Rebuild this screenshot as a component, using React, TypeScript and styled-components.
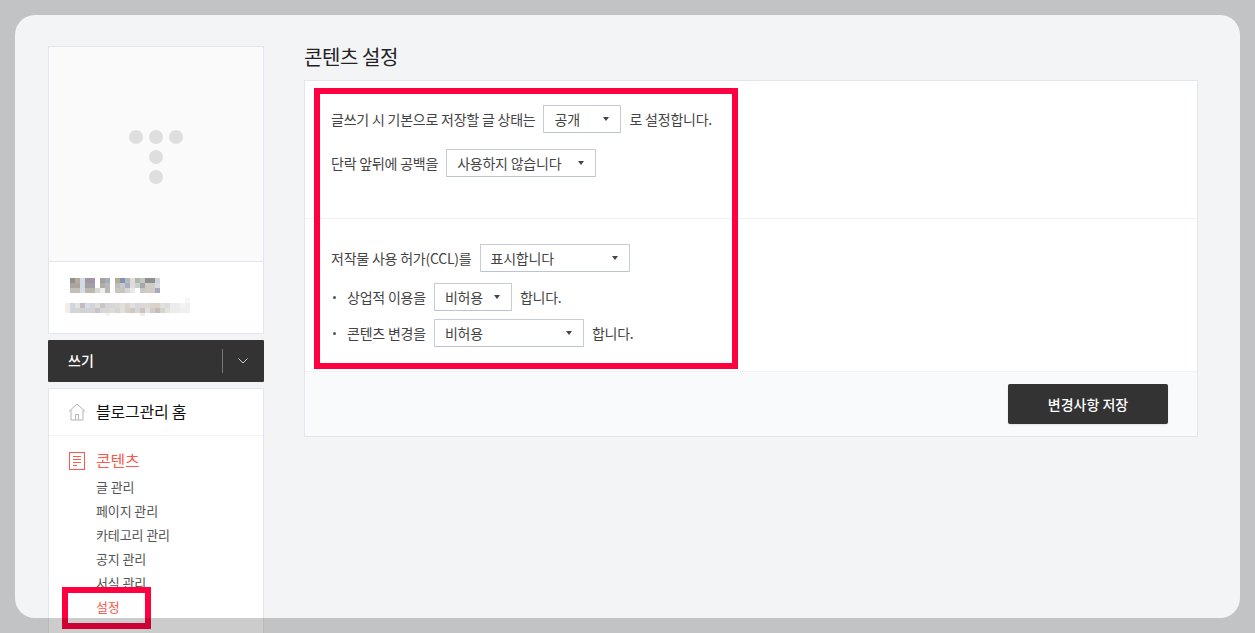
import React from "react";
import styled, { createGlobalStyle } from "styled-components";

const Global = createGlobalStyle`
  html, body { margin: 0; padding: 0; width: 1255px; height: 633px; overflow: hidden; background: #f3f4f6; }
  body { font-family: "Noto Sans CJK KR", "Noto Sans", sans-serif; color: #333; }
  * { box-sizing: border-box; }
`;
const Page = styled.div`
  position: relative; width: 1255px; height: 633px; overflow: hidden;
  display: grid; grid-template-columns: 216px 894px; gap: 40px; padding: 46px 0 0 48px;
`;
const Frame = styled.div`
  position: absolute; left: 15px; top: 15px; width: 1225px; height: 603px; border-radius: 20px;
  box-shadow: 0 0 0 60px rgba(0,0,0,.2); pointer-events: none; z-index: 5;
`;
const Highlight = styled.div<{ $l: number; $t: number; $w: number; $h: number }>`
  position: absolute; left: ${p => p.$l}px; top: ${p => p.$t}px; width: ${p => p.$w}px; height: ${p => p.$h}px;
  border: 6px solid #ff0040; z-index: 3;
`;
const Sidebar = styled.aside`display: flex; flex-direction: column;`;
const Profile = styled.div`border: 1px solid #e3e6ee; background: #fff; height: 288px; display: flex; flex-direction: column;`;
const Cover = styled.div`height: 215px; background: #fafafa; border-bottom: 1px solid #e3e6ee; display: flex; align-items: center; justify-content: center; padding: 8px 0 0 2px;`;
const ProfileInfo = styled.div`flex: 1; padding: 16px 0 0 16px;`;
const WriteBar = styled.div`
  margin-top: 6px; height: 42px; background: #333; border-radius: 1px; display: flex; align-items: center;
  padding-left: 20px; color: #fff; font-size: 14px; font-weight: 500;
`;
const WriteLabel = styled.span`flex: 1; line-height: 20px; margin-top: -3px;`;
const WriteArrow = styled.span`
  width: 42px; height: 24px; border-left: 1px solid #777; display: flex; align-items: center; justify-content: center; padding-right: 2px;
`;
const Menu = styled.nav`margin-top: 6px; border: 1px solid #e3e6ee; background: #fff; height: 260px;`;
const HomeRow = styled.div`
  height: 47px; display: flex; align-items: center; padding-left: 19px; gap: 10px; border-bottom: 1px solid #f1f2f5;
  font-size: 16px; letter-spacing: -.25px; color: #111; line-height: 20px;
`;
const HomeLabel = styled.span`margin-top: -2px;`;
const Group = styled.div`padding: 12px 0 0 20px;`;
const GroupTitle = styled.div`display: flex; align-items: center; gap: 11px; font-size: 16px; letter-spacing: -.25px; color: #f95a4c; height: 26px; margin-bottom: 1px;`;
const GroupLabel = styled.span`margin-top: -2px;`;
const SubItem = styled.div<{ $on?: boolean }>`
  margin-left: 27px; height: 24px; line-height: 24px; font-size: 13px; letter-spacing: -.12px; color: ${p => p.$on ? "#f95a4c" : "#555"};
`;
const Main = styled.main`display: flex; flex-direction: column;`;
const Title = styled.h2`margin: 0; height: 34px; font-size: 20px; letter-spacing: -.4px; line-height: 21px; font-weight: 400; color: #222;`;
const Card = styled.section`border: 1px solid #e3e6ee; background: #fff; height: 357px; display: flex; flex-direction: column;`;
const Section = styled.div<{ $h: number; $top: number }>`
  height: ${p => p.$h}px; padding: ${p => p.$top}px 0 0 26px; border-bottom: 1px solid #f1f2f5;
  display: flex; flex-direction: column;
`;
const Row = styled.div<{ $mb?: number }>`
  height: 28px; margin-bottom: ${p => p.$mb ?? 0}px; display: flex; align-items: center; gap: 8px;
  font-size: 14px; letter-spacing: -.22px; color: #444;
`;
const Bullet = styled.span`
  width: 8px; display: flex; justify-content: center; margin-left: -1px; margin-right: 1px;
  &::before { content: ""; width: 3px; height: 3px; border-radius: 50%; background: #555; }
`;
const Select = styled.div<{ $w: number }>`
  width: ${p => p.$w}px; height: 28px; border: 1px solid #c5cbd8; border-bottom-color: #bcc3d1; background: #fff; border-radius: 1px;
  padding: 0 10px; display: flex; align-items: center; justify-content: space-between; color: #444;
`;
const Caret = styled.span`width: 0; height: 0; border-left: 3.5px solid transparent; border-right: 3.5px solid transparent; border-top: 4px solid #444; margin-right: 1px;`;
const Footer = styled.div`flex: 1; background: #f9fafc; display: flex; justify-content: flex-end; align-items: flex-start; padding: 12px 29px 0 0;`;
const SaveButton = styled.button`
  width: 160px; height: 40px; border: 0; border-radius: 2px; background: #333; color: #fff; font: 500 14px "Noto Sans CJK KR", sans-serif;
  box-shadow: 0 1px 2px rgba(0,0,0,.1);
`;

const W = "#ffffff";
const nameRows = [
  ["#909090","#b5ab98","#cfdce6","#a295a5","#a295a5",W,"#a89e98","#a0aec0",W,"#b5aa98","#7f92ae","#b5b8c4","#e0dcd6","#b1b5b2","#c0c8c0","#8f8f8f","#8f8f8f","#cdd4dc"],
  ["#aaa49c","#aaa49c","#cfdce6","#a8a098","#9aa0b0",W,"#b0aca8","#b8b8b8",W,"#c0bcb4","#c4c8cc","#a8b0bc","#e0dcd6","#c8d0d0","#a8a8a8","#d0ccc8","#d0ccc8","#d8dce0"],
  ["#c4bfb8","#c4bfb8","#d4dde4","#bdb8ac","#bdb8ac","#d8d8d4","#eeeeee","#b8bab4",W,"#c8c6bc","#c8c6bc","#d4d8dc","#e8e8e6",W,"#c8c8c4","#d0ccc4","#d0ccc4","#a4acbc"],
];
const mailRows = [
  ["#f4ece6","#ccd8e0","#e4e2e2","#c0bcc4","#d8dce2","#cfd4dc","#e0dcdc","#c8c4c8","#d8d4d4","#d4d8dc","#dcd8d4","#e2dedc","#d8d4d0","#e2e0dc","#d4d8dc","#e0d8d0","#dcd8d8","#d8d2ca","#d8d2ca","#e2e0dc","#dcdcdc","#ececec","#ececec","#f4f4f4","#f0f0f0"],
  ["#f4ece6","#ccd8e0","#d8d4d4","#d4d0cc","#cfd4dc","#d8d0cc","#c8c4c8","#d4d8dc","#ddd6d0","#dcdcdc","#d8d4d0","#e2e0dc","#d8d2ca","#cfc9c2","#d8d6d6","#c8c4c0","#e0e0e0","#d4ccc4","#c4beb6","#d8d4cc","#e2e2de","#ececec","#ececec","#f0f0f0","#f0f0f0"],
];

const Dots = () => (
  <svg width="56" height="56" viewBox="0 0 56 56" fill="#dedede">
    {[[7,7],[27,7],[47,7],[27,27],[27,47]].map(([x,y]) => <circle key={`${x}-${y}`} cx={x} cy={y} r="7" />)}
  </svg>
);
const Pixels = () => (
  <svg width="130" height="42" style={{ display: "block" }}>
    {nameRows.map((row, r) => row.map((c, i) => <rect key={`n${r}-${i}`} x={5 + i * 5} y={r * 5} width="5" height="5" fill={c} />))}
    {mailRows.map((row, r) => row.map((c, i) => <rect key={`m${r}-${i}`} x={i * 5} y={25 + r * 5} width="5" height="5" fill={c} />))}
    <rect x="40" y="35" width="5" height="3" fill="#f2f2f2" />
    <rect x="75" y="35" width="5" height="3" fill="#eeeeee" />
    <rect x="120" y="20" width="5" height="5" fill="#f6f6f6" />
  </svg>
);
const HomeIcon = () => (
  <svg width="18" height="18" viewBox="0 0 18 18" fill="none" stroke="#b4b4b4" strokeWidth="1">
    <path d="M0.8 8.6 9 1l8.2 7.6M3 7v10h12V7M7.5 17v-5.5h3V17" />
  </svg>
);
const DocIcon = () => (
  <svg width="16" height="18" viewBox="0 0 16 18" fill="none" stroke="#f95a4c" strokeWidth="1">
    <rect x="0.5" y="0.5" width="15" height="17" />
    <path d="M4 4.5h8M4 7.5h8M4 10.5h8M4 13.5h4" />
  </svg>
);
const Chevron = () => (
  <svg width="10" height="6" viewBox="0 0 10 6" fill="none" stroke="#ccc"><path d="M.5.5 5 5 9.5.5" /></svg>
);
const Sel = ({ w, children }: { w: number; children: React.ReactNode }) => (
  <Select $w={w}><span>{children}</span><Caret /></Select>
);

export default function App() {
  return (
    <Page>
      <Global />
      <Sidebar>
        <Profile>
          <Cover><Dots /></Cover>
          <ProfileInfo><Pixels /></ProfileInfo>
        </Profile>
        <WriteBar><WriteLabel>쓰기</WriteLabel><WriteArrow><Chevron /></WriteArrow></WriteBar>
        <Menu>
          <HomeRow><HomeIcon /><HomeLabel>블로그관리 홈</HomeLabel></HomeRow>
          <Group>
            <GroupTitle><DocIcon /><GroupLabel>콘텐츠</GroupLabel></GroupTitle>
            <SubItem>글 관리</SubItem>
            <SubItem>페이지 관리</SubItem>
            <SubItem>카테고리 관리</SubItem>
            <SubItem>공지 관리</SubItem>
            <SubItem>서식 관리</SubItem>
            <SubItem $on>설정</SubItem>
          </Group>
        </Menu>
      </Sidebar>
      <Main>
        <Title>콘텐츠 설정</Title>
        <Card>
          <Section $h={138} $top={24}>
            <Row $mb={16}>글쓰기 시 기본으로 저장할 글 상태는 <Sel w={78}>공개</Sel> 로 설정합니다.</Row>
            <Row>단락 앞뒤에 공백을 <Sel w={150}>사용하지 않습니다</Sel></Row>
          </Section>
          <Section $h={153} $top={25}>
            <Row $mb={11}>저작물 사용 허가(CCL)를 <Sel w={150}>표시합니다</Sel></Row>
            <Row $mb={8}><Bullet />상업적 이용을 <Sel w={78}>비허용</Sel> 합니다.</Row>
            <Row><Bullet />콘텐츠 변경을 <Sel w={150}>비허용</Sel> 합니다.</Row>
          </Section>
          <Footer><SaveButton>변경사항 저장</SaveButton></Footer>
        </Card>
      </Main>
      <Highlight $l={314} $t={88} $w={424} $h={281} />
      <Highlight $l={62} $t={587} $w={89} $h={42} />
      <Frame />
    </Page>
  );
}
